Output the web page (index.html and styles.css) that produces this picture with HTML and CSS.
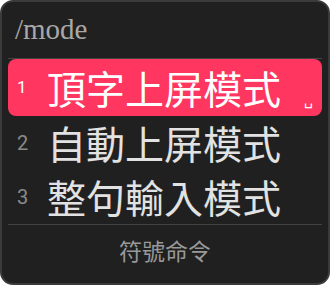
FILE: index.html
```html
<!DOCTYPE html>
<html>
<head>
<meta charset="utf-8">
<link rel="stylesheet" href="styles.css">
</head>
<body>
<div class="panel">
  <div class="header">/mode</div>
  <ul class="list">
    <li class="item selected"><span class="num">1</span><span class="text">頂字上屏模式</span><span class="hint">␣</span></li>
    <li class="item"><span class="num">2</span><span class="text">自動上屏模式</span></li>
    <li class="item"><span class="num">3</span><span class="text">整句輸入模式</span></li>
  </ul>
  <div class="footer">符號命令</div>
</div>
</body>
</html>
```
FILE: styles.css
```css
html, body {
  margin: 0;
  padding: 0;
  background: #ffffff;
}
.panel {
  box-sizing: border-box;
  width: 330px;
  height: 285px;
  background: #202020;
  border: 2px solid #3a3a3a;
  border-radius: 13px;
  padding: 0 6px;
  display: flex;
  flex-direction: column;
}
.header {
  height: 57px;
  border-bottom: 1px solid #444;
  font-family: "Liberation Serif", serif;
  font-size: 29px;
  color: #a8a8a8;
  padding-left: 7px;
  line-height: 54px;
  box-sizing: border-box;
}
.list {
  list-style: none;
  margin: 0;
  padding: 0;
}
.item {
  display: flex;
  align-items: center;
  height: 54px;
  color: #e2e2e2;
}
.item.selected {
  height: 57px;
  background: #fe3660;
  border-radius: 8px;
  color: #ffffff;
}
.num {
  width: 39px;
  padding-left: 9px;
  box-sizing: border-box;
  font-family: Roboto, sans-serif;
  font-size: 20px;
  color: #8a8a8a;
}
.selected .num {
  font-size: 17px;
  color: #fff;
}
.text {
  font-family: "Noto Sans CJK TC", sans-serif;
  font-size: 39px;
  line-height: 1;
}
.hint {
  margin-left: auto;
  margin-right: 9px;
  align-self: flex-end;
  margin-bottom: 8px;
  font-family: "DejaVu Sans", sans-serif;
  font-size: 14px;
}
.footer {
  margin-top: auto;
  margin-bottom: 2px;
  height: 58px;
  border-top: 1px solid #444;
  box-sizing: border-box;
  text-align: center;
  font-family: "Noto Sans CJK TC", sans-serif;
  font-size: 23px;
  color: #999;
  line-height: 50px;
}
```
